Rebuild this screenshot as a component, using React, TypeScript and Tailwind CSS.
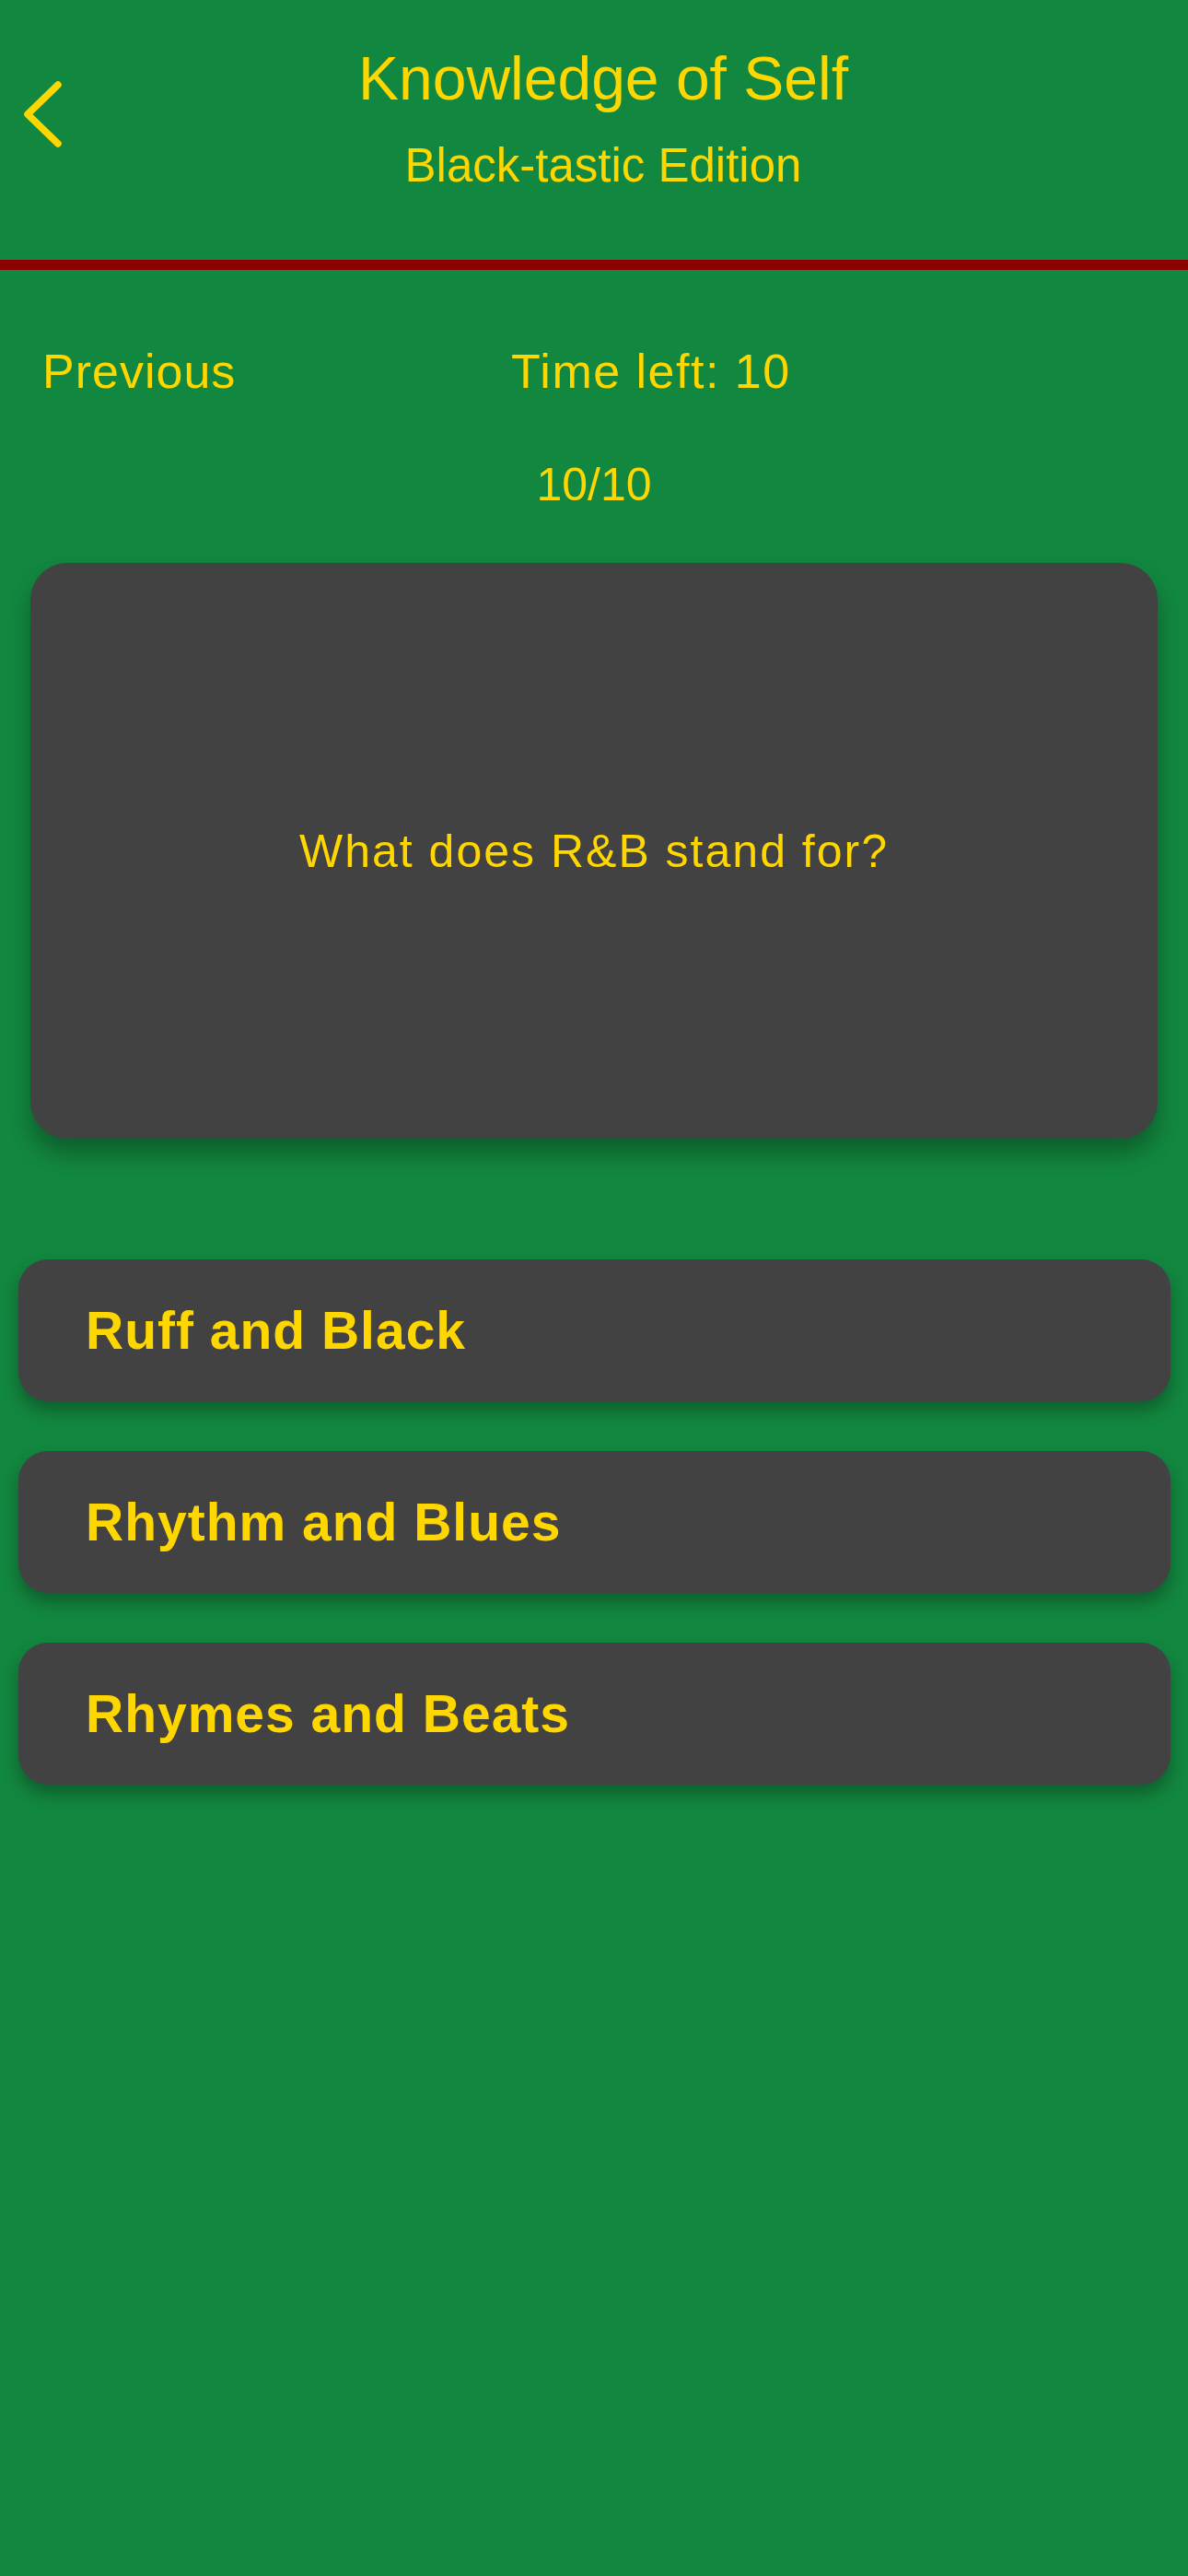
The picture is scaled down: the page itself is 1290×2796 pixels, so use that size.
const answers = ["Ruff and Black", "Rhythm and Blues", "Rhymes and Beats"];

function BackChevron() {
    return (
        <svg width="48" height="74" viewBox="0 0 48 74" fill="none" className="absolute left-[22px] top-[87px]">
            <path d="M41 5 L8 37 L41 69" stroke="#FFD700" strokeWidth="7.5" strokeLinecap="round" strokeLinejoin="round" />
        </svg>
    );
}

function AnswerButton({ label }: { label: string }) {
    return (
        <button className="w-full h-[154px] rounded-[32px] bg-[#424242] shadow-[0_10px_18px_rgba(0,0,0,0.3)] flex items-center pl-[73px] text-left">
            <span className="text-[57px] leading-none font-bold text-[#FFD700] tracking-[1px]">{label}</span>
        </button>
    );
}

export default function App() {
    return (
        <div className="min-h-screen bg-[#12873f] font-['Liberation_Sans',Arial,sans-serif] text-[#FFD700]">
            <header className="relative h-[293px] border-b-[11px] border-[#8B0000] flex flex-col items-center pl-5">
                <BackChevron />
                <h1 className="mt-[52px] text-[66px] leading-none font-normal">Knowledge of Self</h1>
                <p className="mt-[36px] text-[51px] leading-none">Black-tastic Edition</p>
            </header>

            <div className="flex items-start pt-[84px] pl-[46px]">
                <span className="w-[209px] text-[52px] leading-none tracking-[1px]">Previous</span>
                <span className="ml-[300px] text-[52px] leading-none tracking-[1.5px]">Time left: 10</span>
            </div>

            <div className="mt-[72px] text-center text-[50px] leading-none">10/10</div>

            <div className="mt-[60px] mx-[33px] h-[625px] rounded-[40px] bg-[#424242] shadow-[0_16px_24px_rgba(0,0,0,0.3)] flex items-center justify-center">
                <p className="text-[50px] leading-none tracking-[2px]">What does R&amp;B stand for?</p>
            </div>

            <div className="mt-[131px] mx-[20px] mr-[19px] flex flex-col gap-[54px] pb-10">
                {answers.map((a) => (
                    <AnswerButton key={a} label={a} />
                ))}
            </div>
        </div>
    );
}
